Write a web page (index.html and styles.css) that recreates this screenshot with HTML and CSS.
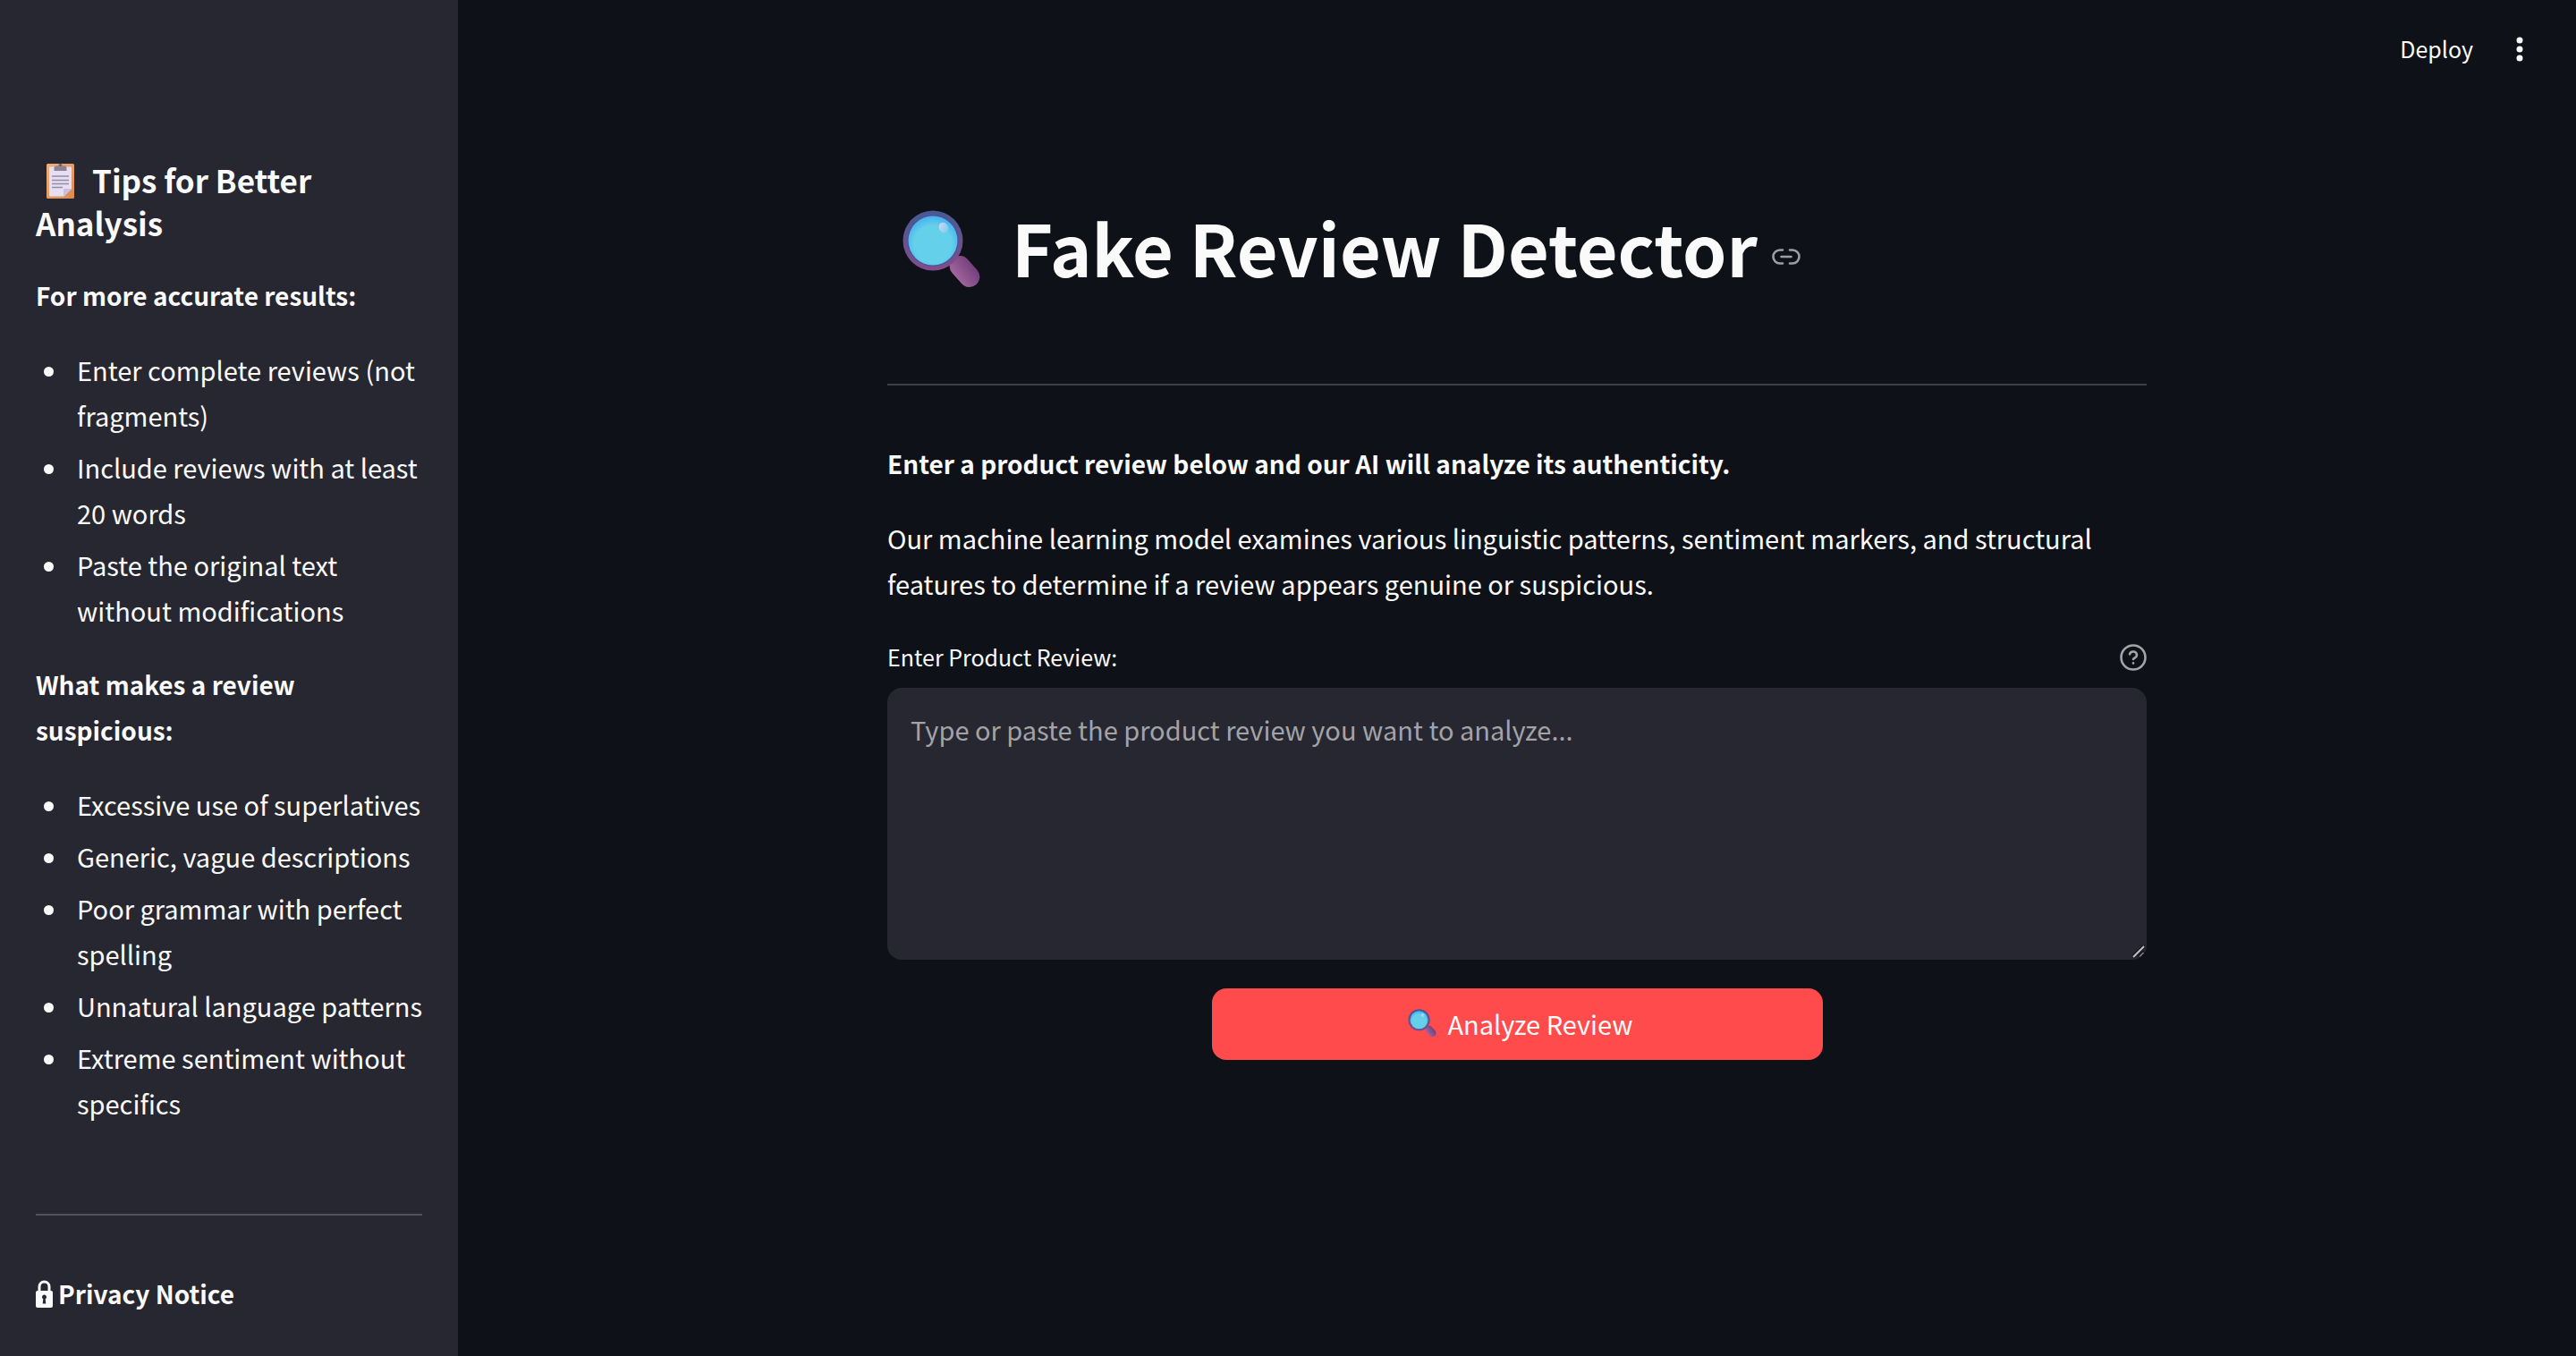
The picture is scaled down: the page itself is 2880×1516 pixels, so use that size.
FILE: index.html
```html
<!DOCTYPE html>
<html lang="en">
<head>
<meta charset="utf-8">
<title>Fake Review Detector</title>
<link rel="stylesheet" href="styles.css">
</head>
<body>
<svg class="defs" aria-hidden="true">
  <defs>
    <linearGradient id="rim" x1="0" y1="0" x2="0" y2="1"><stop offset="0" stop-color="#475a92"/><stop offset="1" stop-color="#834c8b"/></linearGradient>
    <radialGradient id="lens" cx=".5" cy=".58" r=".55"><stop offset=".7" stop-color="#65d0e9"/><stop offset="1" stop-color="#4bb5f0"/></radialGradient>
    <linearGradient id="handle" x1=".7" y1="0" x2=".5" y2="1"><stop offset="0" stop-color="#733f7c"/><stop offset="1" stop-color="#a0649c"/></linearGradient>
    <linearGradient id="shine" x1="0" y1="0" x2=".6" y2="1"><stop offset="0" stop-color="#d4daf3"/><stop offset="1" stop-color="#82cdf0"/></linearGradient>
    <linearGradient id="board" x1="0" y1="0" x2="1" y2="1"><stop offset="0" stop-color="#f0b07c"/><stop offset="1" stop-color="#d98a50"/></linearGradient>
    <symbol id="magnifier" viewBox="0 0 87 88">
      <rect x="50" y="57" width="39" height="23" rx="11.500" transform="rotate(48 69.500 68.500)" fill="url(#handle)"/>
      <circle cx="34" cy="34" r="33.500" fill="url(#rim)"/>
      <circle cx="34" cy="34" r="28.500" fill="#46509c"/>
      <circle cx="34" cy="34" r="27.500" fill="url(#lens)"/>
      <ellipse cx="46" cy="19.500" rx="5" ry="6" transform="rotate(-30 46 19.500)" fill="url(#shine)"/>
    </symbol>
  </defs>
</svg>
<div class="app">
  <aside class="sidebar">
    <h3 class="tips-title"><svg class="clipboard" viewBox="0 0 31 40" aria-hidden="true"><rect y="1" width="31" height="39" rx="1.500" fill="url(#board)"/><path d="M4 4.500h23a1 1 0 0 1 1 1V29l-8.500 8.500H4a1 1 0 0 1-1-1v-31a1 1 0 0 1 1-1z" fill="#e6dff3"/><path d="M28 29l-9 9v-8a1 1 0 0 1 1-1z" fill="#c9bfe0"/><path d="M8.500 9V6a2.500 2.500 0 0 1 2.500-2.500h2a2.500 2.500 0 0 1 5 0h2A2.500 2.500 0 0 1 22.500 6v3z" fill="#8d8290"/><circle cx="15.500" cy="2.500" r="1" fill="#4a4350"/><path d="M6 15h19M6 19.500h19M6 23.500h19M6 27.500h12" stroke="#958da3" stroke-width="1.500"/></svg>Tips for Better Analysis</h3>
    <p class="bold"><strong>For more accurate results:</strong></p>
    <ul>
      <li>Enter complete reviews (not fragments)</li>
      <li>Include reviews with at least 20 words</li>
      <li>Paste the original text without modifications</li>
    </ul>
    <p class="bold"><strong>What makes a review suspicious:</strong></p>
    <ul>
      <li>Excessive use of superlatives</li>
      <li>Generic, vague descriptions</li>
      <li>Poor grammar with perfect spelling</li>
      <li>Unnatural language patterns</li>
      <li>Extreme sentiment without specifics</li>
    </ul>
    <hr>
    <p class="bold privacy"><svg class="lock" viewBox="0 0 19 32" aria-hidden="true"><path d="M4 13V7.500a5.500 5.500 0 0 1 11 0V13" fill="none" stroke="#fafafa" stroke-width="3"/><rect y="12" width="19" height="19" rx="2" fill="#fafafa"/><path d="M9.500 16.500a2.500 2.500 0 0 1 1.200 4.700l.6 5.300H7.700l.6-5.300a2.500 2.500 0 0 1 1.200-4.700z" fill="#262730"/></svg><strong>Privacy Notice</strong></p>
  </aside>
  <div class="page">
    <header class="toolbar">
      <button class="deploy" type="button">Deploy</button>
      <button class="menu" type="button" aria-label="Main menu"><svg viewBox="0 0 8 28"><g fill="#fafafa"><circle cx="4" cy="4" r="3.500"/><circle cx="4" cy="14" r="3.500"/><circle cx="4" cy="24" r="3.500"/></g></svg></button>
    </header>
    <main class="content">
      <h1><svg class="title-icon" aria-hidden="true"><use href="#magnifier"/></svg>Fake Review Detector<a class="anchor" href="#" aria-label="Link to heading"><svg viewBox="0 0 32 18" fill="none" stroke="#9d9fa2" stroke-width="2.600" stroke-linecap="round"><path d="M12 1.500H9a7.500 7.500 0 0 0 0 15h3M20 1.500h3a7.500 7.500 0 0 1 0 15h-3M10.500 9h11"/></svg></a></h1>
      <hr>
      <p class="bold lead"><strong>Enter a product review below and our AI will analyze its authenticity.</strong></p>
      <p>Our machine learning model examines various linguistic patterns, sentiment markers, and structural features to determine if a review appears genuine or suspicious.</p>
      <form>
        <div class="field-head">
          <label for="review">Enter Product Review:</label>
          <button class="help" type="button" aria-label="Help"><svg viewBox="0 0 30 30" fill="none" stroke="#a3a4a6" stroke-width="2.600" stroke-linecap="round" stroke-linejoin="round"><circle cx="15" cy="15" r="13.500"/><path d="M11 11.300a4.100 4.100 0 0 1 8 1.200c0 2.700-4 3.600-4 4.500"/><path d="M15 21.400v.1"/></svg></button>
        </div>
        <div class="field">
          <textarea id="review" placeholder="Type or paste the product review you want to analyze..."></textarea>
          <svg class="grip" viewBox="0 0 14 14" aria-hidden="true"><path d="M0 13.500L13.500 0M7 13l6-6" stroke="#15161b" stroke-width="4"/><path d="M1 13L13 1" stroke="#c4c4c6" stroke-width="2"/><path d="M8 12.500l4.500-4.500" stroke="#85868b" stroke-width="1.500"/></svg>
        </div>
        <button class="analyze" type="button"><svg class="button-icon" aria-hidden="true"><use href="#magnifier"/></svg>Analyze Review</button>
      </form>
    </main>
  </div>
</div>
</body>
</html>
```
FILE: styles.css
```css
* { box-sizing: border-box; }

body {
  margin: 0;
  background: #0e1117;
  color: #fafafa;
  font: 400 29px/51px "Noto Sans CJK SC", "Noto Sans", sans-serif;
}

h1, h3, p, ul { margin: 0; }
.bold { font-size: 28px; }
button, textarea { font: inherit; color: inherit; border: 0; }
button { background: none; padding: 0; cursor: pointer; }
svg { display: block; }
.defs { position: absolute; width: 0; height: 0; }

hr {
  margin: 0;
  border: 0;
  height: 2px;
  background: #3e4046;
}

.app {
  display: grid;
  grid-template-columns: 512px 1fr;
  min-height: 100vh;
}

.sidebar {
  background: #262730;
  padding: 177px 40px 0;
}
.sidebar p { margin-top: 32px; }
.sidebar ul { margin: 32px -8px 0 0; padding-left: 46px; list-style: none; }
.sidebar hr { margin: 98px 0 62px; background: #51525b; }
.sidebar li { margin-bottom: 7px; }
.sidebar li::before {
  content: "";
  display: inline-block;
  width: 11px;
  height: 11px;
  margin: 0 26px 0 -37px;
  border-radius: 50%;
  background: #fafafa;
  vertical-align: 5px;
}

.tips-title { font-size: 35px; line-height: 48px; }
.clipboard {
  display: inline-block;
  width: 31px;
  height: 40px;
  margin: 0 20px 0 12px;
  vertical-align: -6px;
}

.sidebar .privacy { display: flex; align-items: center; gap: 6px; margin-top: 0; }
.lock { width: 19px; height: 32px; }

.toolbar {
  display: flex;
  justify-content: flex-end;
  align-items: center;
  gap: 48px;
  height: 110px;
  padding-right: 59px;
}
.deploy { padding-bottom: 2px; font-size: 25px; line-height: 42px; }
.menu svg { width: 8px; height: 28px; }

.content {
  max-width: 1408px;
  margin: 0 auto;
  padding: 113px 0 80px;
}

h1 {
  display: flex;
  align-items: center;
  font-size: 79px;
  line-height: 106px;
}
.title-icon { width: 87px; height: 88px; margin: 6px 35px 0 17px; }
.anchor { margin: 22px 0 0 16px; }
.anchor svg { width: 32px; height: 18px; }
.content hr { margin: 100px 0 62px; }
.lead { margin-bottom: 32px; }

.field-head {
  display: flex;
  justify-content: space-between;
  align-items: center;
  margin: 35px 0 14px;
  font-size: 25px;
  line-height: 42px;
}
.help { padding-top: 2px; }
.help svg { width: 30px; height: 30px; }

.field { position: relative; }
textarea {
  display: block;
  width: 100%;
  height: 304px;
  padding: 21px 26px;
  border-radius: 16px;
  background: #262730;
  resize: none;
}
textarea::placeholder { color: #a3a3a7; opacity: 1; }
.grip { position: absolute; right: 2px; bottom: 2px; width: 14px; height: 14px; }

.analyze {
  display: flex;
  justify-content: center;
  align-items: center;
  gap: 12px;
  width: 683px;
  max-width: 100%;
  height: 80px;
  margin: 32px auto 0;
  padding: 0 0 2px 8px;
  border-radius: 16px;
  background: #ff4b4b;
}
.button-icon { width: 32px; height: 32px; }
```
